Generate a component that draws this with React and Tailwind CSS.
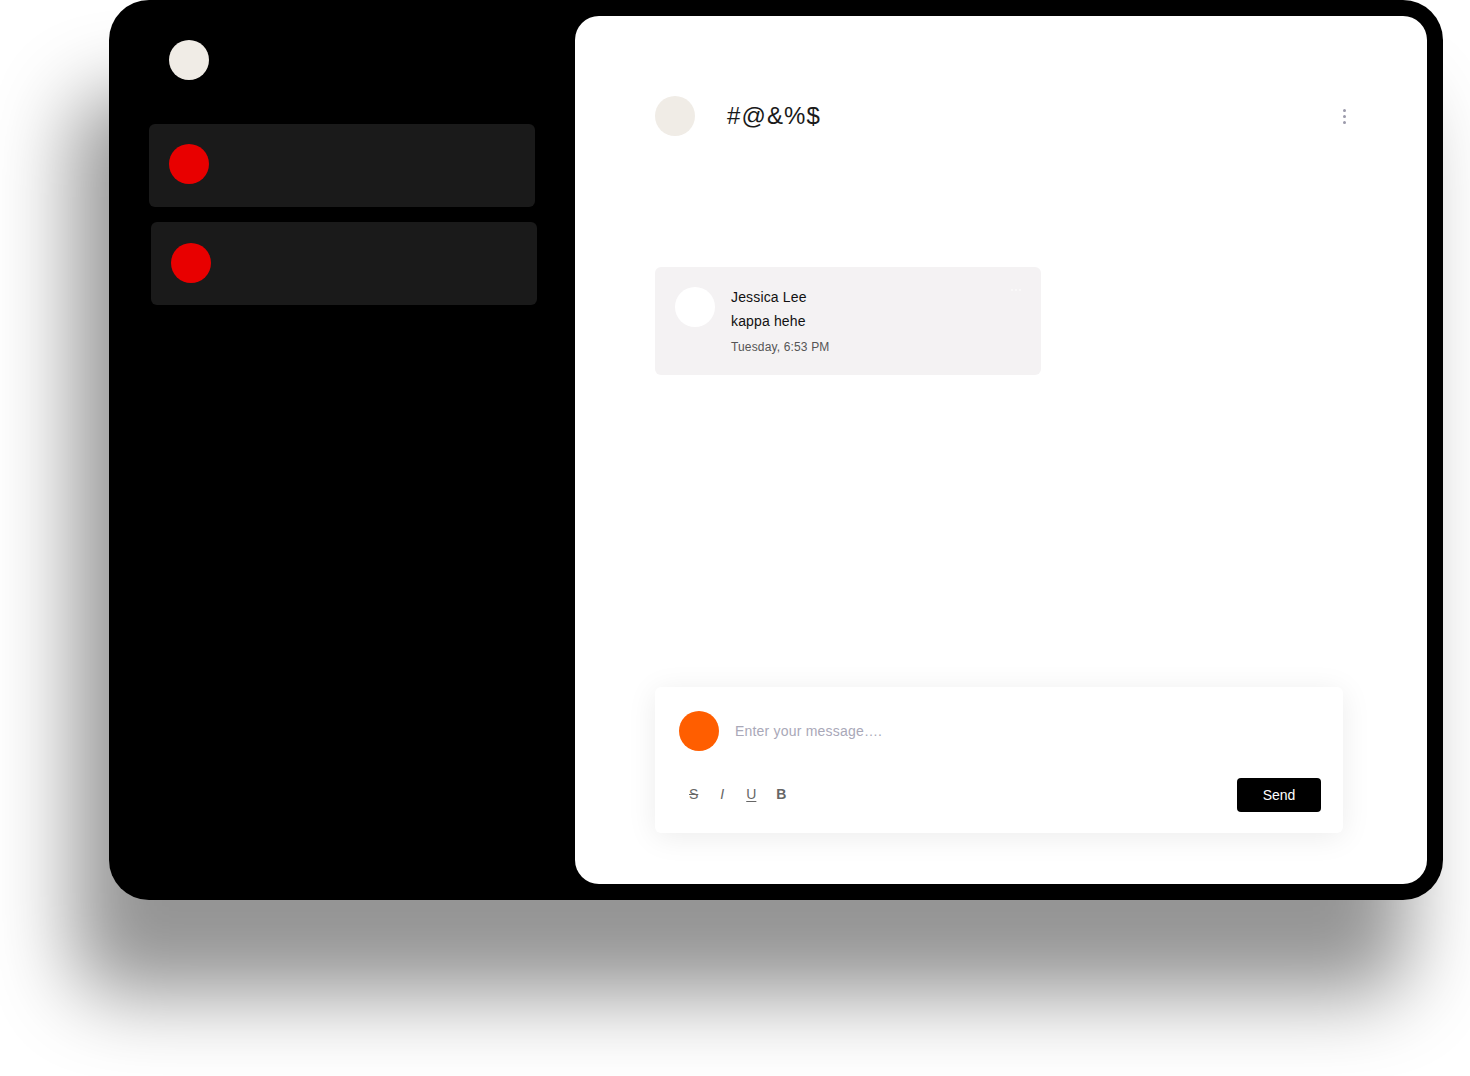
export default function App() {
  return (
    <div className="w-[1470px] h-[1076px] bg-white overflow-hidden relative" style={{ fontFamily: '"Liberation Sans", Arial, sans-serif' }}>
      <div className="ml-[109px] w-[1334px] h-[900px] bg-black rounded-[40px] flex shadow-[-35px_95px_80px_rgba(0,0,0,0.42)]">
        {/* Sidebar */}
        <div className="w-[466px] shrink-0 flex flex-col pl-[40px] pt-[40px]">
          <div className="w-10 h-10 rounded-full bg-[#f0ece6] ml-[20px]"></div>
          <div className="mt-[44px] w-[386px] h-[83px] rounded-[6px] bg-[#1a1a1a] flex items-start pt-[20px] pl-[20px]">
            <div className="w-10 h-10 rounded-full bg-[#e80000]"></div>
          </div>
          <div className="mt-[15px] ml-[2px] w-[386px] h-[83px] rounded-[6px] bg-[#1a1a1a] flex items-start pt-[21px] pl-[20px]">
            <div className="w-10 h-10 rounded-full bg-[#e80000]"></div>
          </div>
        </div>
        {/* Main */}
        <div className="my-[16px] mr-[16px] w-[852px] bg-white rounded-[24px] flex flex-col px-[80px] pt-[80px] pb-[50px]">
          <div className="flex items-center h-10">
            <div className="w-10 h-10 rounded-full bg-[#f0ece6]"></div>
            <div className="ml-[32px] text-[24px] text-[#1a1a1a] tracking-[1.1px]">#@&amp;%$</div>
            <div className="ml-auto mr-[1px] flex flex-col gap-[3px] items-center">
              <div className="w-[3px] h-[3px] rounded-full bg-[#9b9aab]"></div>
              <div className="w-[3px] h-[3px] rounded-full bg-[#9b9aab]"></div>
              <div className="w-[3px] h-[3px] rounded-full bg-[#9b9aab]"></div>
            </div>
          </div>
          <div className="mt-[131px] w-[386px] h-[108px] rounded-[6px] bg-[#f4f2f3] relative flex pt-[20px] pl-[20px]">
            <div className="w-10 h-10 rounded-full bg-white shrink-0"></div>
            <div className="ml-[16px] flex flex-col tracking-[0.15px]">
              <div className="text-[14px] leading-[20px] text-[#111]">Jessica Lee</div>
              <div className="text-[14px] leading-[20px] text-[#111] mt-[4px]">kappa hehe</div>
              <div className="text-[12px] leading-[16px] text-[#555] mt-[8px]">Tuesday, 6:53 PM</div>
            </div>
            <div className="absolute right-[20px] top-[22px] flex gap-[2px]">
              <div className="w-[2px] h-[2px] rounded-full bg-[#fbfafa]"></div>
              <div className="w-[2px] h-[2px] rounded-full bg-[#fbfafa]"></div>
              <div className="w-[2px] h-[2px] rounded-full bg-[#fbfafa]"></div>
            </div>
          </div>
          <div className="mt-auto mb-[1px] w-[688px] h-[146px] bg-white rounded-[6px] shadow-[0_4px_30px_rgba(0,0,0,0.08)] pl-[24px] pr-[22px] pt-[24px] flex flex-col">
            <div className="flex items-center">
              <div className="w-10 h-10 rounded-full bg-[#ff5e00]"></div>
              <div className="ml-[16px] text-[14px] text-[#a9a8b8] tracking-[0.2px]">Enter your message….</div>
            </div>
            <div className="mt-[27px] flex items-center">
              <div className="flex items-center text-[14px] leading-[20px] text-[#666] pl-[10px] mt-[-3px]">
                <span className="line-through">S</span>
                <span className="ml-[22px] italic">I</span>
                <span className="ml-[22px] underline underline-offset-2">U</span>
                <span className="ml-[20px] font-bold">B</span>
              </div>
              <div className="ml-auto w-[84px] h-[34px] bg-black rounded-[4px] text-white text-[14px] flex items-center justify-center">Send</div>
            </div>
          </div>
        </div>
      </div>
    </div>
  );
}
